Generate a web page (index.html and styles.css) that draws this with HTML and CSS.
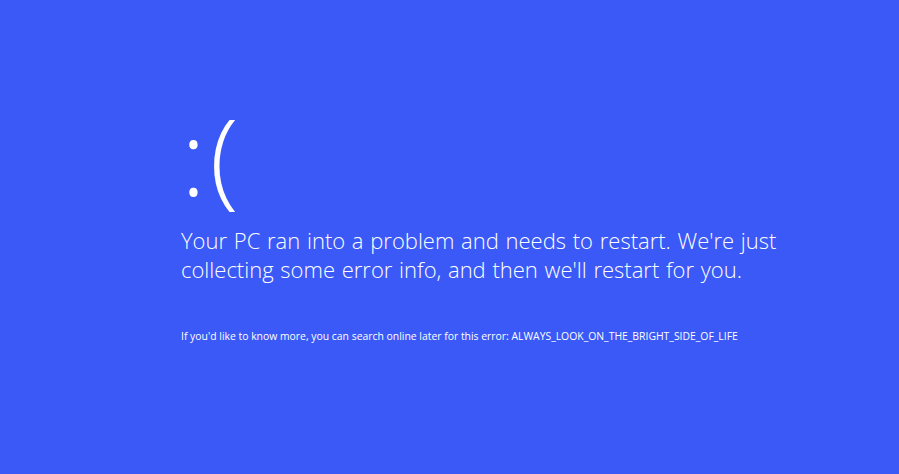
FILE: index.html
```html
<!DOCTYPE html>
<html lang="en">
<head>
    <meta charset="UTF-8">
    <meta name="viewport" content="width=device-width, initial-scale=1.0">
    <title>Blue Screen</title>
    <link rel="stylesheet" href="styles.css">
</head>
<body>
    <!-- Main message block -->
    <div class="screen">
        <div class="face"><span class="colon">:</span><span class="paren">(</span></div>
        <p class="message">Your PC ran into a problem and needs to restart. We're just<br>collecting some error info, and then we'll restart for you.</p>
        <p class="details">If you'd like to know more, you can search online later for this error: ALWAYS_LOOK_ON_THE_BRIGHT_SIDE_OF_LIFE</p>
    </div>
</body>
</html>
```

FILE: styles.css
```css
/* Reset */
body, p {
    margin: 0;
    padding: 0;
}

body {
    background-color: #3a59f7;
    color: #ffffff;
    font-family: 'Open Sans', 'Noto Sans', sans-serif;
    height: 100vh;
    overflow: hidden;
}

/* Text column */
.screen {
    padding: 100px 0 0 181px;
}

/* Sad face */
.face {
    display: flex;
    align-items: baseline;
    height: 126px;
    font-weight: 300;
    line-height: 1;
}

.colon {
    font-size: 104px;
    margin-right: 4px;
    position: relative;
    top: 2px;
}

.paren {
    font-size: 106px;
    position: relative;
    top: 1px;
}

/* Big message */
.message {
    font-size: 22px;
    font-weight: 300;
    line-height: 29px;
    word-spacing: 1px;
}

/* Small line */
.details {
    margin-top: 45px;
    font-size: 10.4px;
    line-height: 14px;
}
```
